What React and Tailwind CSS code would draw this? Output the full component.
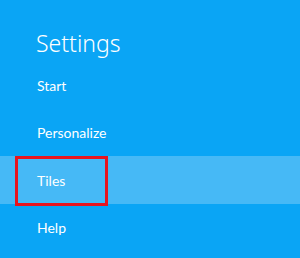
const items = ['Start', 'Personalize', 'Tiles', 'Help']

export default function App() {
  return (
    <div className="w-[300px] h-[258px] overflow-hidden bg-[#0aa5f5] text-white font-['Segoe_UI','Noto_Sans','Open_Sans',sans-serif]">
      {/* Header */}
      <div className="h-[62px] pl-[36px] pt-[28px]">
        <h1 className="text-[23px] leading-[30px] font-light">Settings</h1>
      </div>

      {/* Menu */}
      <ul className="font-['Lato','Noto_Sans',sans-serif]">
        {items.map((item) => {
          const active = item === 'Tiles'
          return (
            <li
              key={item}
              className={
                active
                  ? 'relative h-[48px] flex items-center pl-[37px] text-[14px] bg-[#46b9f6]'
                  : 'h-[47px] flex items-center pl-[37px] text-[14px]'
              }
            >
              {item}
              {active && (
                <span className="absolute left-[15px] top-0 w-[93px] h-[50px] border-[3px] border-[#e8141e]" />
              )}
            </li>
          )
        })}
      </ul>
    </div>
  )
}
